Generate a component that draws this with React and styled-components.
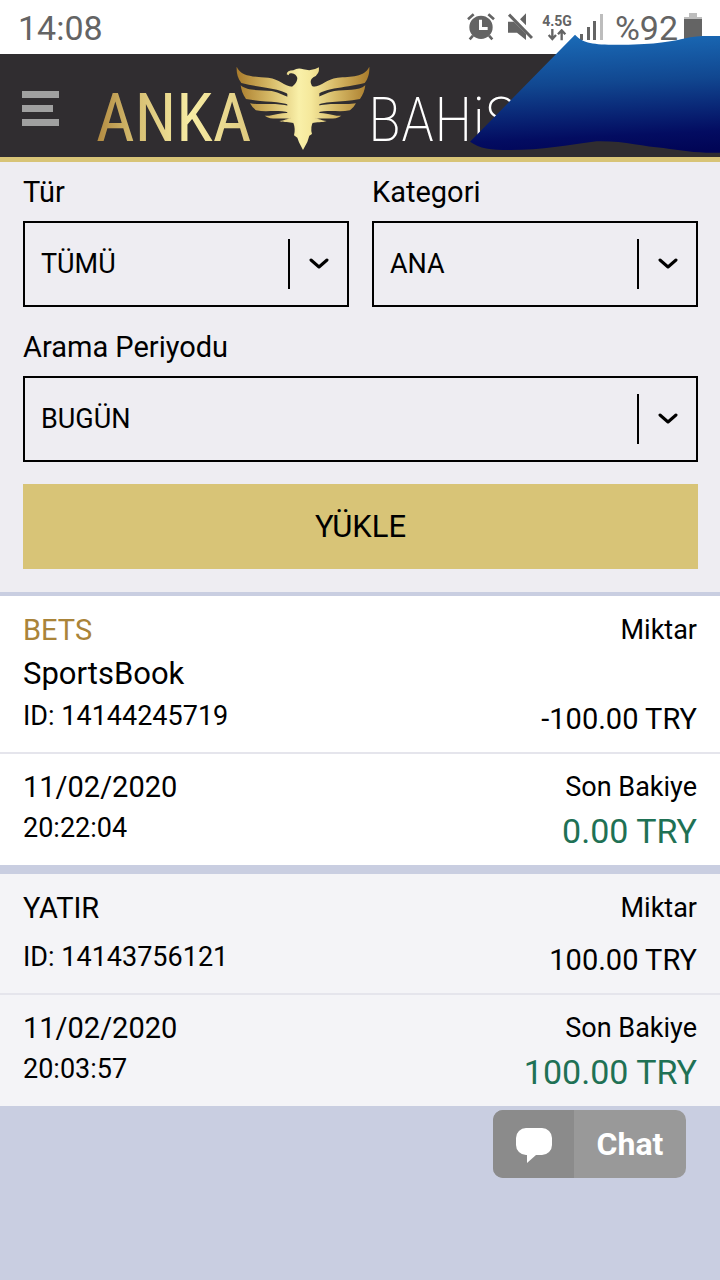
import React, { useState } from 'react';
import styled, { createGlobalStyle } from 'styled-components';

const records = [
  {
    type: 'BETS',
    product: 'SportsBook',
    id: '14144245719',
    amount: '-100.00 TRY',
    date: '11/02/2020',
    time: '20:22:04',
    balance: '0.00 TRY',
  },
  {
    type: 'YATIR',
    id: '14143756121',
    amount: '100.00 TRY',
    date: '11/02/2020',
    time: '20:03:57',
    balance: '100.00 TRY',
  },
];

function StatusBar() {
  return (
    <Status>
      <StatusText>14:08</StatusText>
      <StatusIcons>
        <svg width='28' height='28' viewBox='0 0 84 84' fill='#646464'>
          <path
            fillRule='evenodd'
            d='M42 8a35 35 0 1 0 0 70a35 35 0 1 0 0-70zM36 20h9v22h17v9H36z'
          />
          <path
            d='M3 19L20 4M81 19L64 4M18 68L8 79M66 68L76 79'
            stroke='#646464'
            strokeWidth='8'
          />
        </svg>
        <Mute width='26' height='28' viewBox='0 0 78 84' fill='#646464'>
          <path d='M3 26h18l36 36v19L30 59H3zM57 1v36L39 19z' />
          <path d='M6 5L75 75' stroke='#646464' strokeWidth='9' />
        </Mute>
        <Network>
          <span>4.5G</span>
          <svg width='20' height='12' viewBox='0 0 60 36'>
            <path
              d='M16 0v28M5 18l11 12l11-12M44 34V6M33 16L44 4l11 12'
              fill='none'
              stroke='#646464'
              strokeWidth='7'
            />
          </svg>
        </Network>
        <Signal width='23' height='26' viewBox='0 0 23 26' fill='#646464'>
          <path d='M0 20h3v6H0zM7 13h3v13H7zM13 7h3v19h-3z' />
          <path d='M20 0h3v26h-3z' fill='#bdbdbd' />
        </Signal>
        <StatusText>%92</StatusText>
        <svg width='18' height='28' viewBox='0 0 18 28'>
          <path d='M5 0h8v4h5v2H0V4h5z' fill='#bdbdbd' />
          <path d='M0 6h18v22H0z' fill='#646464' />
        </svg>
      </StatusIcons>
    </Status>
  );
}

function Logo() {
  return (
    <svg width='430' height='103' viewBox='94 54 430 103' role='img' aria-label='Anka Bahis'>
      <defs>
        <linearGradient id='anka' gradientUnits='userSpaceOnUse' x1='97' y1='0' x2='248' y2='0'>
          <stop offset='0' stopColor='#b28a41' />
          <stop offset='0.25' stopColor='#d5bd70' />
          <stop offset='0.62' stopColor='#f7eca4' />
          <stop offset='1' stopColor='#dfca80' />
        </linearGradient>
        <linearGradient id='wings' gradientUnits='userSpaceOnUse' x1='20' y1='0' x2='418' y2='0'>
          <stop offset='0' stopColor='#a97b2b' />
          <stop offset='0.25' stopColor='#d6b966' />
          <stop offset='0.47' stopColor='#f9f0a9' />
          <stop offset='0.56' stopColor='#f5e89b' />
          <stop offset='0.78' stopColor='#cfaf5b' />
          <stop offset='1' stopColor='#a97b2b' />
        </linearGradient>
        <g id='wing'>
          <path d='M20 50C34 82 75 79 115 83C150 87 160 108 188 110L190 144C160 112 100 116 34 99C22 84 19 66 20 50z' />
          <path d='M32 106C52 124 90 119 125 123C150 127 162 140 188 144V170C160 152 110 158 48 147C38 134 34 120 32 106z' />
          <path d='M60 160C90 166 135 156 178 168V188C140 178 110 188 78 181Q66 172 60 160z' />
          <path d='M104 197C130 199 140 188 182 188V207C150 202 125 212 104 197z' />
          <path d='M148 213C165 212 168 206 188 204L192 220C178 214 162 219 148 213z' />
        </g>
      </defs>
      <LogoText x='96' y='141' fill='url(#anka)'>
        ANKA
      </LogoText>
      <g transform='translate(230 50) scale(0.3333)' fill='url(#wings)'>
        <use href='#wing' />
        <use href='#wing' transform='translate(438 0) scale(-1 1)' />
        <path d='M170 73Q171 61 190 61Q204 52 220 58Q246 65 267 52Q269 74 250 82Q236 92 246 108L268 118V190L250 214Q240 232 246 252L238 257L232 276L219 300L207 277L202 263L192 256Q197 236 190 218L172 190V122L188 109Q202 98 202 84Q199 72 185 70Q176 68 176 76z' />
      </g>
      <LogoText x='368' y='141' $thin fill='#ffffff'>
        BAHiS
      </LogoText>
    </svg>
  );
}

function SelectField({ id, label, value, options }) {
  const [selected, setSelected] = useState(value);

  return (
    <Field>
      <label htmlFor={id}>{label}</label>
      <SelectBox>
        <select id={id} value={selected} onChange={(e) => setSelected(e.target.value)}>
          {options.map((option) => (
            <option key={option}>{option}</option>
          ))}
        </select>
        <Indicator>
          <svg width='20' height='14' viewBox='0 0 20 14'>
            <path
              d='M2 3l8 7l8-7'
              fill='none'
              stroke='#000'
              strokeWidth='3'
              strokeLinecap='round'
              strokeLinejoin='round'
            />
          </svg>
        </Indicator>
      </SelectBox>
    </Field>
  );
}

function Record({ item }) {
  return (
    <RecordBox>
      <Summary>
        <Column>
          <div>
            <Title $gold={item.type === 'BETS'}>{item.type}</Title>
            {item.product && <Product>{item.product}</Product>}
          </div>
          <Identifier>ID: {item.id}</Identifier>
        </Column>
        <Column $right>
          <Caption>Miktar</Caption>
          <Amount>{item.amount}</Amount>
        </Column>
      </Summary>
      <Detail>
        <Column>
          <Title>{item.date}</Title>
          <Time>{item.time}</Time>
        </Column>
        <Column $right>
          <Caption>Son Bakiye</Caption>
          <Balance>{item.balance}</Balance>
        </Column>
      </Detail>
    </RecordBox>
  );
}

function App() {
  return (
    <>
      <GlobalStyle />
      <Top>
        <StatusBar />
        <Header>
          <MenuButton aria-label='Menü'>
            <span />
            <span />
            <span />
          </MenuButton>
          <Logo />
        </Header>
        <Scribble width='270' height='170' viewBox='0 0 810 510'>
          <defs>
            <linearGradient id='ink' x1='0.55' y1='0' x2='0.65' y2='1'>
              <stop offset='0' stopColor='#1a6ab6' />
              <stop offset='0.4' stopColor='#114790' />
              <stop offset='0.85' stopColor='#030c61' />
              <stop offset='1' stopColor='#010556' />
            </linearGradient>
          </defs>
          <path
            d='M375 104C400 130 430 134 500 134C600 134 660 126 700 116C740 106 770 108 810 108V458C740 460 700 452 640 444C580 440 520 422 440 424C350 436 280 450 180 450C120 450 90 446 60 425z'
            fill='url(#ink)'
          />
        </Scribble>
      </Top>
      <Filters onSubmit={(e) => e.preventDefault()}>
        <SelectField id='type' label='Tür' value='TÜMÜ' options={['TÜMÜ', 'BETS', 'YATIR']} />
        <SelectField id='category' label='Kategori' value='ANA' options={['ANA']} />
        <Wide>
          <SelectField id='period' label='Arama Periyodu' value='BUGÜN' options={['BUGÜN', 'DÜN']} />
        </Wide>
        <LoadButton type='submit'>YÜKLE</LoadButton>
      </Filters>
      <Records>
        {records.map((item) => (
          <Record key={item.id} item={item} />
        ))}
      </Records>
      <ChatBar>
        <ChatButton>
          <ChatIcon>
            <svg width='36' height='36' viewBox='0 0 36 36' fill='#fff'>
              <path d='M10 0h16a10 10 0 0 1 10 10v7a10 10 0 0 1-10 10h-6l-9 8v-8h-1A10 10 0 0 1 0 17v-7A10 10 0 0 1 10 0z' />
            </svg>
          </ChatIcon>
          <ChatLabel>Chat</ChatLabel>
        </ChatButton>
      </ChatBar>
    </>
  );
}

export default App;

// styled-components
const GlobalStyle = createGlobalStyle`
  * {
    box-sizing: border-box;
  }

  body {
    margin: 0;
    background: #c9cee1;
    color: #000;
    font-family: Roboto, 'Liberation Sans', sans-serif;
  }

  button, select {
    font-family: inherit;
    color: inherit;
    border: none;
    border-radius: 0;
    cursor: pointer;
  }

  svg {
    display: block;
    flex: none;
  }
`;

const Top = styled.div`
  position: relative;
`;

const Status = styled.div`
  display: flex;
  justify-content: space-between;
  align-items: center;
  height: 54px;
  padding: 0 18px;
  background: #fff;
  color: #646464;
`;

const StatusText = styled.span`
  font-size: 34px;
  line-height: 54px;
  padding-top: 2px;
`;

const StatusIcons = styled.div`
  display: flex;
  align-items: center;
`;

const Mute = styled.svg`
  margin: 0 9px 0 12px;
`;

const Network = styled.div`
  display: flex;
  flex-direction: column;
  align-items: center;
  font-size: 14px;
  font-weight: 700;
  line-height: 16px;
`;

const Signal = styled.svg`
  margin: 0 12px 0 8px;

  & + span {
    margin-right: 6px;
  }
`;

const Header = styled.header`
  display: flex;
  align-items: center;
  gap: 35px;
  height: 108px;
  padding-left: 22px;
  background: #302d30;
  border-bottom: 5px solid #d8c477;
`;

const MenuButton = styled.button`
  display: flex;
  flex-direction: column;
  gap: 7px;
  width: 37px;
  padding: 6px 0 0;
  background: none;

  span {
    width: 37px;
    height: 7px;
    background: #a0a0a0;
  }

  span:nth-child(2) {
    width: 31px;
  }
`;

const LogoText = styled.text`
  font-family: 'Roboto Condensed', Roboto, sans-serif;
  font-size: ${(props) => (props.$thin ? 62 : 67)}px;
  font-weight: ${(props) => (props.$thin ? 200 : 400)};
`;

const Scribble = styled.svg`
  position: absolute;
  top: 0;
  right: 0;
  pointer-events: none;
`;

const Filters = styled.form`
  display: grid;
  grid-template-columns: 1fr 1fr;
  gap: 22px 23px;
  padding: 12px 22px 23px 23px;
  background: #eeedf2;
  border-bottom: 4px solid #c9cee1;
`;

const Wide = styled.div`
  grid-column: 1 / -1;
`;

const Field = styled.div`
  display: flex;
  flex-direction: column;
  gap: 11px;
  font-size: 29px;
  line-height: 36px;
`;

const SelectBox = styled.div`
  display: grid;
  height: 86px;
  border: 2px solid #000;

  select {
    grid-area: 1 / 1;
    appearance: none;
    width: 100%;
    padding: 0 76px 0 16px;
    background: none;
    font-size: 27px;
  }
`;

const Indicator = styled.div`
  grid-area: 1 / 1;
  display: flex;
  justify-content: center;
  align-items: center;
  place-self: center end;
  width: 59px;
  height: 50px;
  border-left: 2px solid #000;
  pointer-events: none;
`;

const LoadButton = styled.button`
  grid-column: 1 / -1;
  height: 85px;
  background: #d8c477;
  font-size: 31px;
`;

const Records = styled.main`
  display: flex;
  flex-direction: column;
  gap: 9px;
`;

const RecordBox = styled.article`
  background: #fff;

  &:nth-child(even) {
    background: #f4f4f7;
  }
`;

const Summary = styled.div`
  display: flex;
  justify-content: space-between;
  min-height: 121px;
  padding: 12px 23px 16px;
  border-bottom: 2px solid #e5e5ec;
`;

const Detail = styled.div`
  display: flex;
  justify-content: space-between;
  padding: 11px 23px 12px;
`;

const Column = styled.div`
  display: flex;
  flex-direction: column;
  justify-content: space-between;
  text-align: ${(props) => (props.$right ? 'right' : 'left')};
`;

const Title = styled.div`
  font-size: 29px;
  line-height: 44px;
  color: ${(props) => (props.$gold ? '#aa8439' : 'inherit')};
`;

const Product = styled.div`
  font-size: 31px;
  line-height: 44px;
`;

const Identifier = styled.div`
  font-size: 27px;
  line-height: 40px;
`;

const Time = styled.div`
  flex: 1;
  font-size: 27px;
  line-height: 38px;
`;

const Caption = styled.div`
  font-size: 27px;
  line-height: 44px;
`;

const Amount = styled.div`
  font-size: 29px;
  line-height: 34px;
`;

const Balance = styled.div`
  font-size: 34px;
  line-height: 44px;
  color: #1f7155;
`;

const ChatBar = styled.footer`
  display: flex;
  justify-content: flex-end;
  padding: 4px 34px;
`;

const ChatButton = styled.button`
  display: flex;
  height: 68px;
  padding: 0;
  border-radius: 10px;
  background: #999;
  color: #fff;
  overflow: hidden;
`;

const ChatIcon = styled.span`
  display: flex;
  justify-content: center;
  align-items: center;
  width: 81px;
  height: 68px;
  padding-top: 4px;
  background: #8b8b8b;
`;

const ChatLabel = styled.span`
  width: 112px;
  font-size: 32px;
  font-weight: 700;
  line-height: 68px;
`;
